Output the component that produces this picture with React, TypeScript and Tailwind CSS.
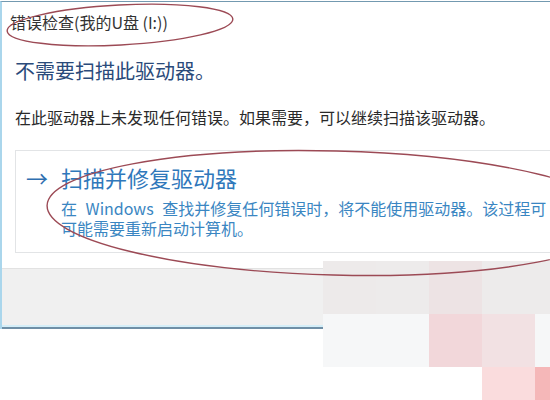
const cjk = { fontFamily: '"Noto Sans CJK SC", "Noto Sans", sans-serif' }

const mosaic = [
    ['bg-[#edeaea]', 'bg-[#edebeb]', 'bg-[#ede3e4]', 'bg-[#edebeb]', 'bg-[#edebeb]'],
    ['bg-[#f6f7f8]', 'bg-[#f6f7f8]', 'bg-[#f2d7da]', 'bg-[#f2e1e3]', 'bg-[#f6f7f8]'],
    ['bg-transparent', 'bg-transparent', 'bg-transparent', 'bg-[#fadcdd]', 'bg-[#f5b7b8]'],
]

export default function App() {
    return (
        <div className="relative h-[400px] w-[550px] overflow-hidden bg-white" style={cjk}>
            {/* Dialog window */}
            <div className="mt-px w-[640px] border-l-2 border-t border-l-[#aad6ec] border-t-[#7399b0] bg-white">
                {/* Title */}
                <div className="flex h-[40px] items-center pl-[8px] text-[16px] text-[#333]">
                    错误检查(我的U盘 (I:))
                </div>

                <div className="pl-[13px]">
                    <h1 className="mt-[15px] text-[20px] leading-[28px] text-[#2a4a7a]">不需要扫描此驱动器。</h1>
                    <p className="mt-[22px] text-[16px] leading-[20px] text-[#2a2a2a]">
                        在此驱动器上未发现任何错误。如果需要，可以继续扫描该驱动器。
                    </p>

                    {/* Command link */}
                    <div className="mt-[23px] flex border border-[#e2e4e6] bg-white pb-[14px] pt-[12px]">
                        <div className="w-[45px] pl-[10px] text-[22px] leading-[28px] text-[#2f6fb0]">→</div>
                        <div className="whitespace-nowrap">
                            <div className="text-[22px] leading-[28px] text-[#2f78bb]">扫描并修复驱动器</div>
                            <div className="mt-[7px] text-[16px] leading-[20px] text-[#3a86c2] [word-spacing:5px]">
                                在 Windows 查找并修复任何错误时，将不能使用驱动器。该过程可
                            </div>
                            <div className="text-[16px] leading-[20px] text-[#3a86c2]">可能需要重新启动计算机。</div>
                        </div>
                    </div>
                </div>

                {/* Footer */}
                <div className="mt-[15px] h-[57px] border-t border-[#e2e2e2] bg-[#f0f0f0]" />
                <div className="h-[2px] bg-[#d4eef8]" />
                <div className="h-[2px] bg-[#6f8fa6]" />
            </div>

            {/* Mosaic watermark */}
            <div className="absolute left-[323px] top-[261px] flex flex-col">
                {mosaic.map((row, r) => (
                    <div key={r} className="flex">
                        {row.map((c, i) => (
                            <div key={i} className={`h-[53px] w-[53px] ${c}`} />
                        ))}
                    </div>
                ))}
            </div>

            {/* Hand drawn annotations */}
            <svg className="pointer-events-none absolute inset-0" width="550" height="400">
                <ellipse cx="120" cy="25" rx="113" ry="20" transform="rotate(-3 120 25)" fill="none" stroke="#9c4a55" strokeWidth="1.4" />
                <ellipse cx="335" cy="213" rx="288" ry="62" transform="rotate(1.5 335 213)" fill="none" stroke="#9c4a55" strokeWidth="1.4" />
            </svg>
        </div>
    )
}
